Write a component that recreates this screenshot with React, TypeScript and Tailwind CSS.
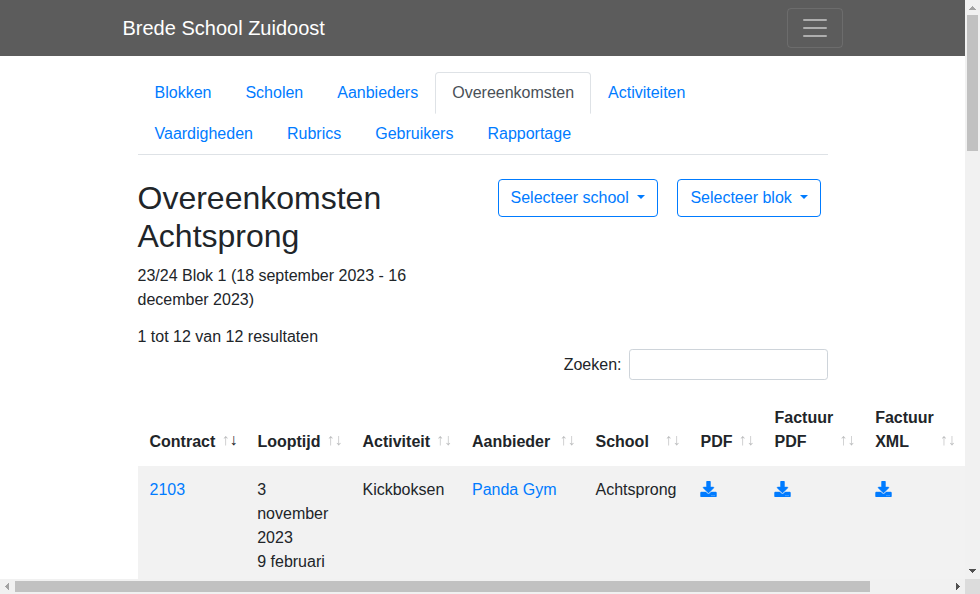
import type { ReactNode } from "react";

const tabs = [
  "Blokken",
  "Scholen",
  "Aanbieders",
  "Overeenkomsten",
  "Activiteiten",
  "Vaardigheden",
  "Rubrics",
  "Gebruikers",
  "Rapportage",
];

function Navbar() {
  return (
    <header className="flex h-14 shrink-0 items-center justify-center bg-[#5c5c5c]">
      <div className="flex w-[720px] items-center justify-between">
        <a className="text-xl leading-[30px] text-white">Brede School Zuidoost</a>
        <button className="flex h-10 w-14 items-center justify-center rounded border border-white/10">
          <svg viewBox="0 0 30 30" className="h-[30px] w-[30px] stroke-white/50" fill="none" strokeWidth="2" strokeLinecap="round">
            <path d="M4 7h22M4 15h22M4 23h22" />
          </svg>
        </button>
      </div>
    </header>
  );
}

function Tabs() {
  return (
    <ul className="flex flex-wrap border-b border-[#dee2e6]">
      {tabs.map((tab) => (
        <li key={tab} className="-mb-px">
          <a
            className={
              tab === "Overeenkomsten"
                ? "block rounded-t border border-[#dee2e6] border-b-white bg-white px-4 py-2 text-[#495057]"
                : "block border border-transparent px-4 py-2 text-[#007bff]"
            }
          >
            {tab}
          </a>
        </li>
      ))}
    </ul>
  );
}

function Dropdown({ label }: { label: string }) {
  return (
    <button className="h-[38px] rounded border border-[#007bff] px-3 text-[#007bff]">
      {label}
      <span className="ml-[8px] inline-block border-x-[4.8px] border-t-[4.8px] border-x-transparent border-t-[#007bff] align-[4.08px]" />
    </button>
  );
}

function Head({ children, sorted = false }: { children: ReactNode; sorted?: boolean }) {
  return (
    <div className="flex items-end justify-between pb-3 pl-3 pr-2 pt-3 font-bold">
      <span>{children}</span>
      <span className="mb-[2px] flex">
        <span className="opacity-30 will-change-[opacity]">↑</span>
        <span className={sorted ? "" : "opacity-30 will-change-[opacity]"}>↓</span>
      </span>
    </div>
  );
}

function Cell({ children }: { children?: ReactNode }) {
  return <div className="p-3">{children}</div>;
}

function Download() {
  return (
    <a className="flex h-6 items-center pb-[2px] text-[#007bff]">
      <svg className="h-4 w-[17px] fill-current stroke-current" viewBox="-16 0 544 512" strokeWidth="14">
        <path d="M216 0h80c13.300 0 24 10.700 24 24v168h87.700c17.800 0 26.700 21.500 14.100 34.100L269.700 378.300c-7.500 7.500-19.800 7.500-27.300 0L90.100 226.100c-12.600-12.600-3.700-34.100 14.100-34.100H192V24c0-13.300 10.700-24 24-24zm296 376v112c0 13.300-10.700 24-24 24H24c-13.300 0-24-10.700-24-24V376c0-13.300 10.700-24 24-24h146.700l49 49c20.100 20.100 52.500 20.100 72.600 0l49-49H488c13.300 0 24 10.700 24 24zm-124 88c0-11-9-20-20-20s-20 9-20 20 9 20 20 20 20-9 20-20zm64 0c0-11-9-20-20-20s-20 9-20 20 9 20 20 20 20-9 20-20z" />
      </svg>
    </a>
  );
}

function Table() {
  return (
    <div className="w-[965px]">
      <div className="grid grid-cols-[107.9px_105.1px_109.5px_123.5px_105px_74px_100.7px_100.7px]">
        <Head sorted>Contract</Head>
        <Head>Looptijd</Head>
        <Head>Activiteit</Head>
        <Head>Aanbieder</Head>
        <Head>School</Head>
        <Head>PDF</Head>
        <Head>
          Factuur
          <br />
          PDF
        </Head>
        <Head>
          Factuur
          <br />
          XML
        </Head>
      </div>
      <div className="grid grid-cols-[107.7px_105.3px_109.5px_123.5px_105px_74px_100.7px_100.7px] bg-[#f2f2f2]">
        <Cell>
          <a className="text-[#007bff]">2103</a>
        </Cell>
        <Cell>
          3 november 2023
          <br />9 februari
        </Cell>
        <Cell>Kickboksen</Cell>
        <Cell>
          <a className="text-[#007bff]">Panda Gym</a>
        </Cell>
        <Cell>Achtsprong</Cell>
        <Cell>
          <Download />
        </Cell>
        <Cell>
          <Download />
        </Cell>
        <Cell>
          <Download />
        </Cell>
      </div>
    </div>
  );
}

function VerticalScrollbar() {
  return (
    <div className="flex flex-col items-center bg-[#f1f1f1]">
      <div className="flex h-[15px] items-center pt-px">
        <svg className="h-1 w-[7px] fill-[#a3a3a3]" viewBox="0 0 7 4" shapeRendering="crispEdges">
          <path d="M3 0h1v1h1v1h1v1h1v1H0V3h1V2h1V1h1z" />
        </svg>
      </div>
      <div className="h-[136px] w-[11px] bg-[#c1c1c1]" />
      <div className="mt-auto flex h-[15px] items-center pb-[2px]">
        <svg className="h-1 w-[7px] fill-[#505050]" viewBox="0 0 7 4" shapeRendering="crispEdges">
          <path d="M0 0h7v1H6v1H5v1H4v1H3V3H2V2H1V1H0z" />
        </svg>
      </div>
    </div>
  );
}

function HorizontalScrollbar() {
  return (
    <div className="flex items-center bg-[#f1f1f1]">
      <div className="flex w-[15px] justify-center pr-px">
        <svg className="h-[7px] w-1 fill-[#a3a3a3]" viewBox="0 0 4 7" shapeRendering="crispEdges">
          <path d="M4 0v7H3V6H2V5H1V4H0V3h1V2h1V1h1V0z" />
        </svg>
      </div>
      <div className="h-[11px] w-[855px] bg-[#c1c1c1]" />
      <div className="ml-auto flex w-[15px] justify-center">
        <svg className="h-[7px] w-1 fill-[#505050]" viewBox="0 0 4 7" shapeRendering="crispEdges">
          <path d="M0 0h1v1h1v1h1v1h1v1H3v1H2v1H1v1H0z" />
        </svg>
      </div>
    </div>
  );
}

export default function App() {
  return (
    <div className="grid h-[594px] w-[980px] grid-cols-[965px_15px] grid-rows-[579px_15px] overflow-hidden bg-white font-['Liberation_Sans',Arial,sans-serif] text-base leading-6 text-[#212529]">
      <div className="flex flex-col overflow-hidden">
        <Navbar />
        <main className="ml-[137.5px] mt-4 w-[690px]">
          <Tabs />
          <div className="mt-6 flex items-start">
            <div className="w-[360px] pr-[45px]">
              <h1 className="mb-2 text-[32px] leading-[38.4px]">Overeenkomsten Achtsprong</h1>
              <p>23/24 Blok 1 (18 september 2023 - 16 december 2023)</p>
            </div>
            <div className="flex gap-[19.6px]">
              <Dropdown label="Selecteer school" />
              <Dropdown label="Selecteer blok" />
            </div>
          </div>
          <div className="mt-[13px]">1 tot 12 van 12 resultaten</div>
          <div className="flex items-center justify-end gap-[7px]">
            <label htmlFor="search" className="pt-px">Zoeken:</label>
            <input id="search" className="h-[31px] w-[199px] rounded-[3.2px] border border-[#ced4da] px-2 text-sm" />
          </div>
          <div className="mt-[14px]">
            <Table />
          </div>
        </main>
      </div>
      <VerticalScrollbar />
      <HorizontalScrollbar />
      <div className="bg-[#dcdcdc]" />
    </div>
  );
}
